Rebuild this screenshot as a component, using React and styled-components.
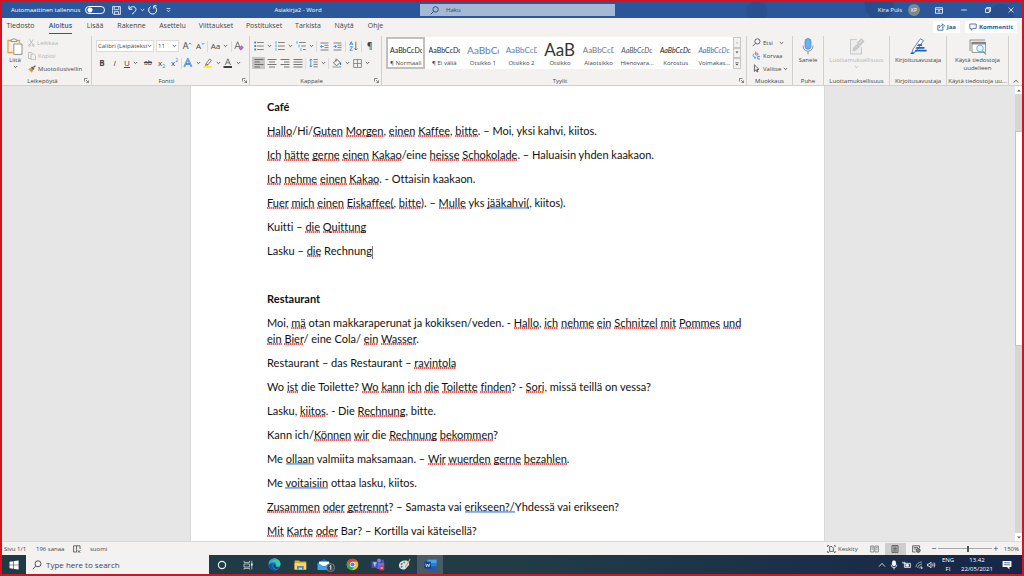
import React from "react";
import styled, { createGlobalStyle } from "styled-components";

const GlobalStyle = createGlobalStyle`
  * {
    box-sizing: border-box;
  }

  body {
    margin: 0;
    font-family: "Open Sans", "Noto Sans", sans-serif;
    font-size: 6px;
    line-height: 8px;
    color: #444;
  }

  button, input, select {
    font: inherit;
    color: inherit;
    margin: 0;
    padding: 0;
    border: 0;
    background: transparent;
    outline: none;
  }

  button {
    cursor: pointer;
  }

  p, h1, h2 {
    margin: 0;
  }
`;

const tabs = [
  ["Tiedosto", 27],
  ["Aloitus", 23],
  ["Lisää", 16],
  ["Rakenne", 27],
  ["Asettelu", 25],
  ["Viittaukset", 32],
  ["Postitukset", 34],
  ["Tarkista", 24],
  ["Näytä", 18],
  ["Ohje", 15],
];

const styleCells = [
  { name: "¶ Normaali", sample: "AaBbCcDc", color: "#222", active: true },
  { name: "¶ Ei väliä", sample: "AaBbCcDc", color: "#222" },
  { name: "Otsikko 1", sample: "AaBbCc", color: "#5b7db8", size: 10 },
  { name: "Otsikko 2", sample: "AaBbCcD", color: "#5b7db8", size: 8 },
  { name: "Otsikko", sample: "AaB", color: "#333", size: 17 },
  { name: "Alaotsikko", sample: "AaBbCcD", color: "#777", size: 8 },
  { name: "Hienovara...", sample: "AaBbCcDc", color: "#555", italic: true },
  { name: "Korostus", sample: "AaBbCcDc", color: "#222", italic: true },
  { name: "Voimakas...", sample: "AaBbCcDc", color: "#4472c4", italic: true },
];

// _word_ is a spelling mark, ~word~ is a grammar mark
const cafe = [
  "_Hallo_/Hi/_Guten_ _Morgen_, _einen_ _Kaffee_, _bitte_. – Moi, yksi kahvi, kiitos.",
  "_Ich_ _hätte_ _gerne_ _einen_ _Kakao_/eine _heisse_ _Schokolade_. – Haluaisin yhden kaakaon.",
  "_Ich_ _nehme_ _einen_ _Kakao_. - Ottaisin kaakaon.",
  "_Fuer_ _mich_ _einen_ _Eiskaffee_~(~, _bitte_). – _Mulle_ yks ~jääkahvi(~, kiitos).",
  "Kuitti – _die_ _Quittung_",
];

const restaurant = [
  "Moi, _mä_ otan makkaraperunat ja kokiksen/veden. - _Hallo_, _ich_ _nehme_ _ein_ _Schnitzel_ _mit_ _Pommes_ _und_ _ein_ _Bier_/ eine Cola/ _ein_ _Wasser_.",
  "Restaurant – das Restaurant – _ravintola_",
  "Wo _ist_ die Toilette? _Wo_ _kann_ _ich_ _die_ _Toilette_ _finden_? - _Sori_, missä teillä on vessa?",
  "Lasku, _kiitos_. - Die _Rechnung_, bitte.",
  "Kann ich/_Können_ _wir_ die _Rechnung_ _bekommen_?",
  "Me ~ollaan~ valmiita maksamaan. – _Wir_ _wuerden_ _gerne_ _bezahlen_.",
  "Me ~voitaisiin~ ottaa lasku, kiitos.",
  "_Zusammen_ _oder_ _getrennt_? – Samasta vai ~erikseen?/~Yhdessä vai erikseen?",
  "_Mit_ _Karte_ _oder_ Bar? – Kortilla vai käteisellä?",
];

function Marked({ text }) {
  return text.split(/(_[^_]+_|~[^~]+~)/).map((part, i) => {
    if (part[0] === "_") return <Spelling key={i}>{part.slice(1, -1)}</Spelling>;
    if (part[0] === "~") return <Grammar key={i}>{part.slice(1, -1)}</Grammar>;
    return part;
  });
}

function Icon({ w, h, children, ...rest }) {
  return (
    <IconStyled
      width={w}
      height={h}
      viewBox={`0 0 ${w} ${h}`}
      fill="none"
      stroke="currentColor"
      strokeWidth="0.8"
      aria-hidden="true"
      {...rest}
    >
      {children}
    </IconStyled>
  );
}

function Chevron() {
  return (
    <Icon w={5} h={4}>
      <path d="M0.8 1 L2.5 2.7 L4.2 1" />
    </Icon>
  );
}

function Lines({ align = "left" }) {
  const short = { left: [0.5, 6], center: [2, 8], right: [4, 9.5], justify: [0.5, 9.5] }[align];
  return (
    <Icon w={10} h={10} stroke="#555">
      <path
        d={`M0.5 1.5H9.5 M${short[0]} 4H${short[1]} M0.5 6.5H9.5 M${short[0]} 9H${short[1]}`}
      />
    </Icon>
  );
}

function ListIcon({ kind }) {
  const x = kind === "multi" ? [0, 2, 4] : [0, 0, 0];
  return (
    <Icon w={10} h={10} stroke="#666">
      {[1.5, 5, 8.5].map((y, i) => (
        <g key={y}>
          {kind === "bullet" ? (
            <rect x="0.3" y={y - 1} width="1.8" height="2" fill="#2b8cd8" stroke="none" />
          ) : (
            <path d={`M${x[i] + 1} ${y - 1.3}V${y + 1.3}`} stroke="#2b9bd8" />
          )}
          <path d={`M${x[i] + 3} ${y}H9.8`} />
        </g>
      ))}
    </Icon>
  );
}

function IndentIcon({ out }) {
  return (
    <Icon w={9} h={9} stroke="#666">
      <path d="M0.5 1H8.5 M4.5 3.3H8.5 M4.5 5.6H8.5 M0.5 8H8.5" />
      <path
        d={out ? "M3.6 4.5H0.6 M1.9 3.1L0.6 4.5L1.9 5.9" : "M0.4 4.5H3.4 M2.1 3.1L3.4 4.5L2.1 5.9"}
        stroke="#2b7cd3"
      />
    </Icon>
  );
}

function SizeMark({ down }) {
  return (
    <MarkIcon w={4} h={8} stroke="#2b7cd3">
      <path d={down ? "M0.6 1L2 2.4L3.4 1" : "M0.6 2.4L2 1L3.4 2.4"} />
    </MarkIcon>
  );
}

function Launcher() {
  return (
    <LauncherButton aria-label="Lisäasetukset">
      <Icon w={5} h={5} strokeWidth="0.6">
        <path d="M0.5 3.5V0.5H3.5 M2 2L4.5 4.5 M4.5 2.4V4.5H2.4" />
      </Icon>
    </LauncherButton>
  );
}

function TitleBar() {
  return (
    <TitleBarStyled>
      <QuickAccess>
        <label htmlFor="autosave">Automaattinen tallennus</label>
        <Toggle id="autosave" type="checkbox" />
        <Tool $w={22} aria-label="Tallenna">
          <Icon w={9} h={9}>
            <path d="M0.6 0.6H8.4V8.4H1.8L0.6 7.2Z M2.2 0.6V3.6H6.8V0.6 M2.4 8.4V5.6H6.6V8.4" />
          </Icon>
        </Tool>
        <Tool $w={18} aria-label="Kumoa">
          <Icon w={9} h={10} strokeWidth="1">
            <path d="M1 0.8V4.2H4.4 M1.2 4C2.8 1.4 6.2 0.8 7.6 3C8.8 5.2 6.8 7 4 9.2" />
          </Icon>
          <Chevron />
        </Tool>
        <Tool $w={15} aria-label="Toista">
          <Icon w={9} h={10} strokeWidth="1">
            <path d="M2.6 1.6A4 4 0 1 0 6.6 1.6 M8.6 0.8H5.8V3.6" />
          </Icon>
        </Tool>
        <Tool $w={16} aria-label="Mukauta">
          <Icon w={5} h={5}>
            <path d="M0.6 0.6H4.4 M1 2.2L2.5 3.8L4 2.2" />
          </Icon>
        </Tool>
      </QuickAccess>
      <FileName>Asiakirja2 - Word</FileName>
      <SearchBox htmlFor="search">
        <Icon w={9} h={9} stroke="#23447b" strokeWidth="0.9">
          <circle cx="5.6" cy="3.4" r="2.7" />
          <path d="M3.7 5.4L0.7 8.4" />
        </Icon>
        <input id="search" placeholder="Haku" />
      </SearchBox>
      <WindowTools>
        <span>Kira Puls</span>
        <Avatar>KP</Avatar>
        <Tool $w={25} aria-label="Valintanauha">
          <Icon w={8} h={7}>
            <path d="M0.5 0.7H7.5V6.3H0.5Z M0.5 2.3H7.5 M4 5.6V3.4 M3 4.3L4 3.3L5 4.3" />
          </Icon>
        </Tool>
        <Tool $w={25} aria-label="Pienennä">
          <Icon w={6} h={6}>
            <path d="M0.2 3H5.8" />
          </Icon>
        </Tool>
        <Tool $w={24} aria-label="Palauta">
          <Icon w={6} h={6}>
            <path d="M0.5 1.7H4.3V5.5H0.5Z M1.7 1.7V0.5H5.5V4.3H4.3" />
          </Icon>
        </Tool>
        <Tool $w={22} aria-label="Sulje">
          <Icon w={6} h={6}>
            <path d="M0.5 0.5L5.5 5.5 M5.5 0.5L0.5 5.5" />
          </Icon>
        </Tool>
      </WindowTools>
    </TitleBarStyled>
  );
}

function Clipboard() {
  return (
    <Group>
      <GroupBody>
        <BigTool $w={26}>
          <Icon w={16} h={17}>
            <path d="M5 2.5H1V14.5H6" stroke="#e8a33d" strokeWidth="1.3" />
            <path d="M10 2.5H12.5V5" stroke="#e8a33d" strokeWidth="1.3" />
            <path d="M4 3.5V1.8H5.4C5.6 0.4 8.2 0.4 8.4 1.8H9.8V3.5Z" fill="#fff" stroke="#777" />
            <path d="M6.8 6H15V16.4H6.8Z" fill="#fff" stroke="#777" />
          </Icon>
          <span>Liitä</span>
          <Chevron />
        </BigTool>
        <Stack>
          <TextTool disabled>
            <Icon w={7} h={8}>
              <path d="M1.4 0.4L5 5.6 M5.4 0.4L1.8 5.6" />
              <circle cx="1.5" cy="6.4" r="0.9" />
              <circle cx="5.3" cy="6.4" r="0.9" />
            </Icon>
            Leikkaa
          </TextTool>
          <TextTool disabled>
            <Icon w={8} h={8}>
              <path d="M3 6.5H0.5V0.5H3.2L4.4 1.7 M3 2H5.8L7.5 3.7V7.6H3Z" />
            </Icon>
            Kopioi
          </TextTool>
          <TextTool>
            <Icon w={8} h={8} stroke="none">
              <path d="M0.3 4.2L3.2 2.6L5.4 5L3.8 7.8Z" fill="#e8923a" />
              <path d="M3 2.6L4.2 1.6L6.4 3.8L5.4 5Z" fill="#555" />
              <path d="M5 2L7 0.2L7.8 1L6 3Z" fill="#555" />
            </Icon>
            Muotoilusivellin
          </TextTool>
        </Stack>
      </GroupBody>
      <GroupLabel $corner>Leikepöytä</GroupLabel>
      <Launcher />
    </Group>
  );
}

function FontGroup() {
  return (
    <Group>
      <Rows>
        <ToolRow>
          <SelectBox $w={58}>
            <select aria-label="Fontti">
              <option>Calibri (Leipätekst</option>
            </select>
            <Chevron />
          </SelectBox>
          <SelectBox $w={23}>
            <select aria-label="Fonttikoko">
              <option>11</option>
            </select>
            <Chevron />
          </SelectBox>
          <Tool $w={13} $size={9}>
            A<SizeMark />
          </Tool>
          <Tool $w={13} $size={8}>
            A<SizeMark down />
          </Tool>
          <Divider />
          <Tool $w={23} $size={8}>
            Aa
            <Chevron />
          </Tool>
          <Divider />
          <Tool $w={14} aria-label="Poista muotoilu">
            <Icon w={10} h={10}>
              <path d="M0.8 8L3.6 0.8L6.4 8 M1.8 5.6H5.4" stroke="#555" />
              <path d="M5 7.4L7.4 4.6L9.4 6.4L7 9.2Z" fill="#b86cc8" stroke="#9a4fb0" strokeWidth="0.5" />
            </Icon>
          </Tool>
        </ToolRow>
        <ToolRow>
          <Tool $w={12} $size={8}><b>B</b></Tool>
          <Tool $w={13} $size={8}><i>I</i></Tool>
          <Tool $w={20} $size={8}>
            <u>U</u>
            <Chevron />
          </Tool>
          <Tool $w={14} $size={7}><s>ab</s></Tool>
          <Tool $w={13} $size={8}>x<Mark>2</Mark></Tool>
          <Tool $w={13} $size={8}>x<Mark $up>2</Mark></Tool>
          <Divider />
          <Tool $w={20} aria-label="Tekstitehosteet">
            <Icon w={10} h={10}>
              <path d="M1.2 8.8L4.9 1L8.6 8.8 M2.6 6H7.2" stroke="#2b7cd3" strokeWidth="1.7" />
              <path d="M1.2 8.8L4.9 1L8.6 8.8" stroke="#fff" strokeWidth="0.4" />
            </Icon>
            <Chevron />
          </Tool>
          <Tool $w={20} aria-label="Korostusväri">
            <Icon w={10} h={10}>
              <path d="M3 5.8L6.6 1L8.4 2.2L5 6.8Z M3 5.8L2.4 7.4L5 6.8" stroke="#666" />
              <path d="M0.5 9H9" stroke="#ffee00" strokeWidth="1.6" />
            </Icon>
            <Chevron />
          </Tool>
          <Tool $w={20} aria-label="Fontin väri">
            <Icon w={10} h={10}>
              <path d="M2.2 7L4.9 0.8L7.6 7 M3.2 4.8H6.6" stroke="#555" />
              <path d="M0.5 9H9" stroke="#111" strokeWidth="1.6" />
            </Icon>
            <Chevron />
          </Tool>
        </ToolRow>
      </Rows>
      <GroupLabel $corner>Fontti</GroupLabel>
      <Launcher />
    </Group>
  );
}

function ParagraphGroup() {
  return (
    <Group>
      <Rows>
        <ToolRow $tight>
          <Tool $w={21} aria-label="Luettelomerkit"><ListIcon kind="bullet" /><Chevron /></Tool>
          <Tool $w={21} aria-label="Numerointi"><ListIcon kind="number" /><Chevron /></Tool>
          <Tool $w={21} aria-label="Monitasoinen"><ListIcon kind="multi" /><Chevron /></Tool>
          <Divider $gap />
          <Tool $w={13} aria-label="Pienennä sisennystä"><IndentIcon out /></Tool>
          <Tool $w={13} aria-label="Suurenna sisennystä"><IndentIcon /></Tool>
          <Divider $gap />
          <Tool $w={13} aria-label="Lajittele">
            <Icon w={9} h={10}>
              <path d="M0.6 4.2L2.2 0.6L3.8 4.2 M1.2 3H3.2 M0.9 5.8H3.6L0.9 9.2H3.7" stroke="#2b7cd3" />
              <path d="M6.8 0.6V9 M5.2 7.4L6.8 9L8.4 7.4" stroke="#555" />
            </Icon>
          </Tool>
          <Divider $gap />
          <Tool $w={13} $size={8}><b>¶</b></Tool>
        </ToolRow>
        <ToolRow $tight>
          <Tool $w={13} $pressed aria-label="Tasaa vasemmalle"><Lines /></Tool>
          <Tool $w={13} aria-label="Keskitä"><Lines align="center" /></Tool>
          <Tool $w={13} aria-label="Tasaa oikealle"><Lines align="right" /></Tool>
          <Tool $w={13} aria-label="Tasaa molemmat"><Lines align="justify" /></Tool>
          <Divider $gap />
          <Tool $w={20} aria-label="Riviväli">
            <Icon w={9} h={10} stroke="#666">
              <path d="M4.5 1.5H8.8 M4.5 4H8.8 M4.5 6.4H8.8 M4.5 8.8H8.8" />
              <path d="M1.8 1V9 M0.4 2.4L1.8 1L3.2 2.4 M0.4 7.6L1.8 9L3.2 7.6" stroke="#2b7cd3" />
            </Icon>
            <Chevron />
          </Tool>
          <Divider $gap />
          <Tool $w={21} aria-label="Varjostus">
            <Icon w={10} h={10}>
              <path d="M1.4 5L5 1.4L8.2 4.6L4.6 7.6Z M4 0.6V3.6" stroke="#555" />
              <path d="M8.6 4.6V7" stroke="#2b7cd3" strokeWidth="1.2" />
              <path d="M0.8 8.4H9V9.6H0.8Z" fill="#fff" stroke="#888" strokeWidth="0.5" />
            </Icon>
            <Chevron />
          </Tool>
          <Tool $w={21} aria-label="Reunaviivat">
            <Icon w={9} h={9} stroke="#777">
              <path d="M0.6 0.6H8.4V8.4H0.6Z M4.5 0.6V8.4 M0.6 4.5H8.4" />
            </Icon>
            <Chevron />
          </Tool>
        </ToolRow>
      </Rows>
      <GroupLabel $corner>Kappale</GroupLabel>
      <Launcher />
    </Group>
  );
}

function StylesGroup() {
  return (
    <Group>
      <Gallery>
        {styleCells.map((cell) => (
          <StyleCell key={cell.name} $active={cell.active}>
            <Sample $color={cell.color} $size={cell.size} $italic={cell.italic}>
              {cell.sample}
            </Sample>
            <span>{cell.name}</span>
          </StyleCell>
        ))}
        <GalleryScroll>
          <button aria-label="Ylös">
            <Icon w={4} h={3} stroke="none">
              <path d="M0.5 2.4L2 0.8L3.5 2.4Z" fill="#bbb" />
            </Icon>
          </button>
          <button aria-label="Alas">
            <Icon w={4} h={3} stroke="none">
              <path d="M0.5 0.6L2 2.2L3.5 0.6Z" fill="#444" />
            </Icon>
          </button>
          <button aria-label="Lisää tyylejä">
            <Icon w={4} h={4} stroke="none">
              <path d="M0.4 0.2H3.6V0.8H0.4Z M0.4 1.8L2 3.6L3.6 1.8Z" fill="#444" />
            </Icon>
          </button>
        </GalleryScroll>
      </Gallery>
      <GroupLabel $corner>Tyylit</GroupLabel>
      <Launcher />
    </Group>
  );
}

function RibbonEnd() {
  return (
    <>
      <Group>
        <Stack $indent>
          <TextTool>
            <Icon w={9} h={9}>
              <circle cx="5.4" cy="3.4" r="2.6" />
              <path d="M3.6 5.2L0.8 8.2" />
            </Icon>
            Etsi
            <Gap />
            <Chevron />
          </TextTool>
          <TextTool>
            <Icon w={9} h={9}>
              <path d="M3.6 0.6V4H5.8V2.2H3.6" stroke="#b05cc0" />
              <path d="M8 5.4H5.8V8H8" stroke="#2b7cd3" />
              <path d="M2.4 2.6C0.4 3 0.4 6.6 3.6 6.6 M2.4 5.2L3.8 6.6L2.4 8" stroke="#2b9bd8" />
            </Icon>
            Korvaa
          </TextTool>
          <TextTool>
            <Icon w={9} h={9}>
              <path d="M2.4 0.8V7.4L4 5.8L5 8L6 7.5L5 5.4H7Z" />
            </Icon>
            Valitse
            <Chevron />
          </TextTool>
        </Stack>
        <GroupLabel>Muokkaus</GroupLabel>
      </Group>
      <Group>
        <BigTool>
          <Icon w={12} h={17}>
            <rect x="3" y="0.6" width="6" height="10.6" rx="3" fill="#6bb2ea" stroke="#3f8fd0" />
            <path d="M1 7.6C1 15 11 15 11 7.6 M6 13.4V16.4" stroke="#777" />
          </Icon>
          <span>Sanele</span>
        </BigTool>
        <GroupLabel>Puhe</GroupLabel>
      </Group>
      <Group>
        <BigTool disabled>
          <Icon w={16} h={17} stroke="#bbb">
            <path d="M8 1.6H1.5V16H12.5V9.4" fill="#eee" />
            <path d="M4 12.8L4.6 9.8L8.6 6L10.8 8.2L6.8 12Z M8.4 4.6L12.4 0.8L15 3.4L11.2 7.4Z" fill="#ccc" />
            <path d="M10.2 5.2L13.2 2.4" stroke="#eee" />
          </Icon>
          <span>Luottamuksellisuus</span>
          <Chevron />
        </BigTool>
        <GroupLabel>Luottamuksellisuus</GroupLabel>
      </Group>
      <Group>
        <BigTool>
          <Icon w={17} h={17} stroke="none">
            <path d="M2.6 11.8L10.4 0.8L13.4 2.6L6 13.4L2 15.6Z" fill="#fff" stroke="#2b62c4" />
            <path d="M8.2 6.2H12V8H7Z M6.6 9H14.4V10.8H5.6Z M5.4 11.8H16.6V13.6H4.4Z M1 14.4L5 14.4L3.4 16H0.4Z" fill="#1f5fc0" />
          </Icon>
          <span>Kirjoitusavustaja</span>
        </BigTool>
        <GroupLabel>Kirjoitusavustaja</GroupLabel>
      </Group>
      <Group>
        <BigTool>
          <Icon w={18} h={17} stroke="#777">
            <path d="M1 13V2H16" />
            <path d="M3 4.4H16.4V14.4H3Z" fill="#fff" />
            <path d="M3 4.4H16.4V6H3Z" fill="#999" />
            <circle cx="11" cy="10.4" r="3.3" fill="#e6f4fd" stroke="#3aa0dc" />
            <path d="M13.4 12.8L17 16.4" stroke="#3aa0dc" strokeWidth="1.1" />
          </Icon>
          <span>Käytä tiedostoja<br />uudelleen</span>
        </BigTool>
        <GroupLabel>Käytä tiedostoja uu...</GroupLabel>
      </Group>
      <Collapse aria-label="Kutista valintanauha">
        <Icon w={6} h={5}>
          <path d="M0.8 3.6L3 1.2L5.2 3.6" />
        </Icon>
      </Collapse>
    </>
  );
}

function StatusBar() {
  return (
    <StatusStyled>
      <StatusText $w={32}>Sivu 1/1</StatusText>
      <StatusText $w={37}>196 sanaa</StatusText>
      <StatusText $w={17}>
        <Icon w={8} h={8}>
          <path d="M0.6 0.8H3.6V7H0.6Z M3.6 0.8H7V4 M4.6 5.6L7.4 7.6 M7.4 5.2L5 7.6" />
        </Icon>
      </StatusText>
      <span>suomi</span>
      <Spacer />
      <TextTool>
        <Icon w={9} h={8}>
          <path d="M0.6 2V0.6H2 M7 0.6H8.2V2 M0.6 6V7.4H2 M7 7.4H8.2V6 M2.6 1.6H5L6.4 3V6.4H2.6Z" />
        </Icon>
        Keskity
      </TextTool>
      <ViewButtons>
        <ViewButton aria-label="Lukutila">
          <Icon w={9} h={8} stroke="#777">
            <path d="M0.6 1H4V7H0.6Z M5 1H8.4V7H5Z M1.4 2.6H3.2 M1.4 4.2H3.2 M5.8 2.6H7.6 M5.8 4.2H7.6" />
          </Icon>
        </ViewButton>
        <ViewButton $active aria-label="Tulostusasettelu">
          <Icon w={8} h={8}>
            <path d="M1 0.6H7V7.4H1Z M2.2 2H5.8 M2.2 3.4H5.8 M2.2 4.8H5.8 M2.2 6H5.8" />
          </Icon>
        </ViewButton>
        <ViewButton aria-label="Verkkoasettelu">
          <Icon w={9} h={8}>
            <path d="M0.6 0.8H7.6V3 M0.6 0.8V7H3.6 M1.8 2.4H6 M1.8 4H4" />
            <circle cx="6.2" cy="5.4" r="2" fill="#888" />
          </Icon>
        </ViewButton>
      </ViewButtons>
      <ZoomButton aria-label="Loitonna">−</ZoomButton>
      <ZoomRange type="range" aria-label="Zoomaus" min="0" max="100" defaultValue="56" />
      <ZoomButton aria-label="Lähennä">+</ZoomButton>
      <ZoomLevel>150%</ZoomLevel>
    </StatusStyled>
  );
}

function Taskbar() {
  return (
    <TaskbarStyled>
      <StartButton aria-label="Start">
        <Icon w={10} h={10} stroke="none">
          <path d="M0.5 1.7L4.4 1.2V4.7H0.5Z M5 1.1L9.6 0.5V4.7H5Z M0.5 5.3H4.4V8.8L0.5 8.3Z M5 5.3H9.6V9.5L5 8.9Z" fill="#fff" />
        </Icon>
      </StartButton>
      <TaskSearch htmlFor="task-search">
        <Icon w={10} h={10} strokeWidth="0.9">
          <circle cx="6" cy="3.8" r="3" />
          <path d="M3.8 6L0.8 9.2" />
        </Icon>
        <input id="task-search" placeholder="Type here to search" />
      </TaskSearch>
      <TaskApps>
        <TaskApp aria-label="Cortana">
          <Icon w={12} h={12}>
            <circle cx="6" cy="6" r="3.6" stroke="#e8eef0" strokeWidth="1.2" />
          </Icon>
        </TaskApp>
        <TaskApp aria-label="Task View">
          <Icon w={12} h={12} stroke="#d0d8da">
            <path d="M2 1.8V3.4H7.6V1.8 M2 5H7.6V8H2Z M2 10.6V9.4H7.6V10.6 M9.8 1.8V10.4" />
            <path d="M9.2 4.4H10.6V6.4H9.2Z" fill="#fff" stroke="none" />
          </Icon>
        </TaskApp>
        <TaskApp aria-label="Edge">
          <Icon w={13} h={13} stroke="none">
            <circle cx="6.5" cy="6.5" r="6" fill="#1b7fd0" />
            <path d="M0.6 6C1 2.6 3.6 0.5 6.5 0.5C10 0.5 12.5 3 12.5 6C12.5 8.4 9.6 9.2 8 8.2C9 6.6 7.8 4.2 5.4 4C3.4 3.8 1.4 4.6 0.6 6Z" fill="#42c7a0" />
            <path d="M0.6 6C1 2.6 3.6 0.5 6.5 0.5C7.6 0.5 8.6 0.8 9.4 1.2C6 1.6 3 3 0.6 6Z" fill="#2ba4dc" />
            <path d="M5.2 5.6C3.4 6.8 4 11 8.6 12.1C5 13 1.4 11 0.9 7.6C1.8 5.6 3.8 5 5.2 5.6Z" fill="#1253a0" />
            <path d="M5.6 6C6.6 5.6 7.8 6.4 7.4 7.6C7.4 9.4 10 10 11.8 9.2C10.6 11 8.8 11 7.4 10.4C5.4 9.4 4.8 7.4 5.6 6Z" fill="#203f50" />
          </Icon>
        </TaskApp>
        <TaskApp aria-label="File Explorer">
          <Icon w={13} h={12} stroke="none">
            <path d="M0.6 1.4H5L6 2.6H12.2V10.6H0.6Z" fill="#e8a928" />
            <path d="M0.6 4H12.2V10.6H0.6Z" fill="#fbd668" />
            <path d="M3 7H9.8V10.6H8V8.8H4.8V10.6H3Z" fill="#3a8fd6" />
          </Icon>
        </TaskApp>
        <TaskApp aria-label="Mail">
          <Icon w={18} h={14} stroke="none">
            <path d="M0.6 5L7 0.8L13.4 5V12H0.6Z" fill="#0f6cbd" />
            <path d="M2 3.6H12V8H2Z" fill="#fff" />
            <path d="M0.6 5L7 8.6L13.4 5V12H0.6Z" fill="#35a8ec" />
            <circle cx="13.6" cy="9.6" r="4" fill="#3a4448" stroke="#8d989c" strokeWidth="0.7" />
            <path d="M12.6 8.4L13.8 7.6V11.8" stroke="#fff" strokeWidth="0.9" />
          </Icon>
        </TaskApp>
        <TaskApp aria-label="Chrome">
          <Icon w={13} h={13} stroke="none">
            <circle cx="6.5" cy="6.5" r="5.8" fill="#fbc116" />
            <path d="M1.5 3.6A5.8 5.8 0 0 1 11.5 3.6L6.5 3.8L4.2 7.8Z" fill="#e33b2e" />
            <path d="M1.5 3.6A5.8 5.8 0 0 0 6 12.3L8.8 7.8L4.2 7.8Z" fill="#2da94f" />
            <circle cx="6.5" cy="6.5" r="2.7" fill="#fff" />
            <circle cx="6.5" cy="6.5" r="2.1" fill="#4285f4" />
          </Icon>
        </TaskApp>
        <TaskApp aria-label="Teams">
          <Icon w={14} h={13} stroke="none">
            <circle cx="8" cy="2.4" r="2" fill="#7b83eb" />
            <circle cx="11.6" cy="3" r="1.4" fill="#5059c9" />
            <path d="M5 4.6H13.2V8.6C12.6 11.4 6 12.4 5 9Z" fill="#6a72d8" />
            <rect x="0.6" y="3.2" width="6.6" height="6.6" rx="0.6" fill="#4b53bc" />
            <path d="M2.2 5H5.6 M3.9 5V8.4" stroke="#fff" strokeWidth="0.9" />
            <circle cx="10.8" cy="10" r="2.6" fill="#d5304f" />
            <path d="M9.4 10H12.2" stroke="#fff" strokeWidth="0.8" />
          </Icon>
        </TaskApp>
        <TaskApp aria-label="Paint">
          <Icon w={13} h={13} stroke="none">
            <path d="M1 8C0.6 4.6 4 2 8 2.6C11.4 3.2 12.2 6.6 10 8.2C8.6 9 8.8 10.6 6.4 11.4C3.8 12 1.2 10.6 1 8Z" fill="#d8e4ea" />
            <circle cx="3.6" cy="6" r="1" fill="#d8453a" />
            <circle cx="6.2" cy="4.6" r="1" fill="#3fa34d" />
            <circle cx="3.6" cy="8.8" r="1" fill="#2b7cd3" />
            <path d="M11.8 0.6L12.6 1.4L7.6 9.6L6.8 9Z" fill="#e0973a" />
          </Icon>
        </TaskApp>
        <TaskApp $active aria-label="Word">
          <Icon w={13} h={12} stroke="none">
            <path d="M3.6 0.6H12.6V4H3.6Z" fill="#41a5ee" />
            <path d="M3.6 4H12.6V7.6H3.6Z" fill="#2b7cd3" />
            <path d="M3.6 7.6H12.6V11.2H3.6Z" fill="#185abd" />
            <rect x="0.4" y="2.8" width="6.6" height="6.6" rx="0.5" fill="#103f91" />
            <path d="M1.6 4.6L2.6 7.8L3.7 5L4.8 7.8L5.8 4.6" stroke="#fff" strokeWidth="0.7" />
          </Icon>
        </TaskApp>
      </TaskApps>
      <Spacer />
      <Tray>
        <Icon w={8} h={8}>
          <path d="M1 5.6L4 2.4L7 5.6" />
        </Icon>
        <Icon w={8} h={10} stroke="#fff">
          <rect x="2.4" y="0.8" width="3.2" height="5" rx="1.6" fill="#fff" />
          <path d="M1.2 4.8C1.4 8.6 6.6 8.6 6.8 4.8 M4 7.6V9.6" />
        </Icon>
        <Icon w={9} h={8}>
          <path d="M2.4 2.4H8.4V6.4H2.4Z M0.4 2H3.4 M1 0.8V2 M2.8 0.8V2" />
          <path d="M3.4 3.2H6.8V5.6H3.4Z" fill="#fff" stroke="none" />
        </Icon>
        <Icon w={8} h={8} stroke="#b8c0cc">
          <path d="M0.8 6A6.4 6.4 0 0 1 7 1 M2.4 7A5 5 0 0 1 7 3 M4.4 7.4A3 3 0 0 1 7 5.2" />
          <circle cx="6.6" cy="7" r="0.7" fill="#fff" />
        </Icon>
        <Icon w={9} h={8}>
          <path d="M0.6 3H2L4 1.2V6.8L2 5H0.6Z M5.6 2.6Q6.6 4 5.6 5.4 M7 1.6Q8.8 4 7 6.4" />
        </Icon>
        <TrayText $w={16}>ENG<br />FI</TrayText>
        <TrayText $w={34}>13.42<br />22/05/2021</TrayText>
        <Icon w={18} h={10}>
          <path d="M4.6 1H13.4V7H11.4V9.4L9 7H4.6Z" fill="#fff" stroke="none" />
          <path d="M6 2.8H12 M6 4.8H12" stroke="#22335a" strokeWidth="0.7" />
        </Icon>
      </Tray>
    </TaskbarStyled>
  );
}

function App() {
  return (
    <>
      <GlobalStyle />
      <Screen>
        <TitleBar />
        <TabBar>
          {tabs.map(([name, width]) => (
            <Tab key={name} $w={width} $active={name === "Aloitus"}>
              {name}
            </Tab>
          ))}
          <Spacer />
          <ShareTools>
            <ShareButton>
              <Icon w={8} h={8}>
                <path d="M3 2.6H0.8V7.2H6V5.4 M2.4 5C2.6 3.4 3.8 2.4 5.4 2.4V0.8L7.6 3L5.4 5V3.6" />
              </Icon>
              Jaa
            </ShareButton>
            <ShareButton>
              <Icon w={8} h={8}>
                <path d="M0.8 1H7.2V5.4H4L2.2 7.2V5.4H0.8Z" />
              </Icon>
              Kommentit
            </ShareButton>
          </ShareTools>
        </TabBar>
        <Ribbon>
          <Clipboard />
          <FontGroup />
          <ParagraphGroup />
          <StylesGroup />
          <RibbonEnd />
        </Ribbon>
        <Workspace>
          <Canvas>
            <Page>
              <h1>Café</h1>
              {cafe.map((line) => (
                <p key={line}><Marked text={line} /></p>
              ))}
              <p>
                <Marked text="Lasku – _die_ Rechnung" />
                <Caret />
              </p>
              <p>&nbsp;</p>
              <h2>Restaurant</h2>
              {restaurant.map((line) => (
                <p key={line}><Marked text={line} /></p>
              ))}
            </Page>
          </Canvas>
          <Scrollbar>
            <button aria-label="Vieritä ylös">
              <Icon w={4} h={3} stroke="none">
                <path d="M0.2 2.6L2 0.6L3.8 2.6Z" fill="#555" />
              </Icon>
            </button>
            <Track>
              <Thumb />
            </Track>
            <button aria-label="Vieritä alas">
              <Icon w={4} h={3} stroke="none">
                <path d="M0.2 0.4L2 2.4L3.8 0.4Z" fill="#555" />
              </Icon>
            </button>
          </Scrollbar>
        </Workspace>
        <StatusBar />
        <Taskbar />
      </Screen>
    </>
  );
}

const Screen = styled.div`
  display: flex;
  flex-direction: column;
  min-height: 100vh;
  border: 2px solid #d8111f;
  background: #f3f2f1;
`;

const IconStyled = styled.svg`
  display: block;
  flex: none;
`;

const MarkIcon = styled(Icon)`
  margin-left: -3px;
`;

const Spacer = styled.div`
  flex: 1;
`;

const Gap = styled.span`
  width: 2px;
`;

const Tool = styled.button`
  display: flex;
  align-items: center;
  justify-content: center;
  gap: 3px;
  flex: none;
  width: ${(p) => p.$w}px;
  height: 12px;
  font-size: ${(p) => p.$size || 6}px;
  background: ${(p) => (p.$pressed ? "#c8c6c4" : "transparent")};
`;

const Mark = styled.span`
  align-self: ${(p) => (p.$up ? "flex-start" : "flex-end")};
  margin-left: -3px;
  font-size: 5px;
  line-height: 6px;
  color: #2b7cd3;
`;

const TitleBarStyled = styled.header`
  display: grid;
  grid-template-columns: 176fr 242fr 195fr 407fr;
  align-items: center;
  height: 16px;
  color: #fff;
  background:
    radial-gradient(circle at 74% 60%, #284f8f 0 10px, transparent 11px),
    radial-gradient(circle at 86% 20%, #274d8c 0 14px, transparent 15px),
    radial-gradient(circle at 98% 90%, #274d8c 0 12px, transparent 13px),
    #2b579a;
`;

const QuickAccess = styled.div`
  display: flex;
  align-items: center;
  padding-left: 9px;

  label {
    width: 70px;
    white-space: nowrap;
  }
`;

const Toggle = styled.input`
  appearance: none;
  width: 20px;
  height: 8px;
  margin-left: 4px;
  border: 1px solid #fff;
  border-radius: 4px;
  background: radial-gradient(circle at 4px 3px, #fff 0 2px, transparent 3px);
`;

const FileName = styled.span`
  padding-right: 2px;
  text-align: center;
`;

const SearchBox = styled.label`
  display: flex;
  align-items: center;
  gap: 7px;
  height: 12px;
  padding-left: 10px;
  background: #a5b8d6;

  input {
    flex: 1;
    min-width: 0;
  }
  input::placeholder {
    color: #23447b;
    opacity: 1;
  }
`;

const WindowTools = styled.div`
  display: flex;
  align-items: center;
  justify-content: flex-end;
`;

const Avatar = styled.span`
  display: grid;
  place-items: center;
  width: 12px;
  height: 12px;
  margin: 0 6px;
  border-radius: 50%;
  font-size: 5px;
  background: #7d8a8c;
`;

const TabBar = styled.nav`
  display: flex;
  align-items: center;
  gap: 15px;
  height: 18px;
  padding: 0 5px;
`;

const Tab = styled.button`
  width: ${(p) => p.$w}px;
  height: 14px;
  display: flex;
  justify-content: center;
  white-space: nowrap;
  font-size: 7px;
  line-height: 12px;
  font-weight: ${(p) => (p.$active ? 600 : 400)};
  color: ${(p) => (p.$active ? "#2b579a" : "#444")};
  border-bottom: 1px solid ${(p) => (p.$active ? "#2b579a" : "transparent")};
`;

const ShareTools = styled.div`
  display: flex;
  gap: 5px;
`;

const ShareButton = styled.button`
  display: flex;
  align-items: center;
  gap: 2px;
  height: 12px;
  padding: 0 4px;
  font-weight: 700;
  color: #2b579a;
  background: #fff;
`;

const Ribbon = styled.div`
  display: grid;
  grid-template-columns: 90fr 158fr 132fr 365fr 46fr 31fr 66fr 57fr 62fr 13fr;
  height: 50px;
  border-bottom: 1px solid #d2d0ce;
`;

const Group = styled.section`
  position: relative;
  display: flex;
  flex-direction: column;
  justify-content: space-between;
  min-width: 0;
  border-right: 1px solid #d2d0ce;
`;

const GroupBody = styled.div`
  display: flex;
`;

const GroupLabel = styled.span`
  padding-right: ${(p) => (p.$corner ? 8 : 0)}px;
  text-align: center;
  white-space: nowrap;
`;

/* sits over the label line, in the corner of the group */
const LauncherButton = styled.button`
  position: absolute;
  right: 2px;
  bottom: 2px;
`;

const BigTool = styled.button`
  display: flex;
  flex-direction: column;
  align-items: center;
  gap: 1px;
  width: ${(p) => (p.$w ? `${p.$w}px` : "100%")};
  padding-top: 2px;
  white-space: nowrap;

  &:disabled {
    color: #b5b3b1;
  }
`;

const Stack = styled.div`
  display: flex;
  flex-direction: column;
  gap: 4px;
  padding-top: 2px;
  padding-left: ${(p) => (p.$indent ? 5 : 0)}px;
`;

const TextTool = styled.button`
  display: flex;
  align-items: center;
  gap: 2px;
  height: 9px;
  white-space: nowrap;

  &:disabled {
    color: #b5b3b1;
  }
`;

const Rows = styled.div`
  display: flex;
  flex-direction: column;
  gap: 5px;
  padding-top: 4px;
`;

const ToolRow = styled.div`
  display: flex;
  align-items: center;
  padding-left: ${(p) => (p.$tight ? 2 : 4)}px;
  height: 12px;
`;

const SelectBox = styled.span`
  display: flex;
  align-items: center;
  width: ${(p) => p.$w}px;
  height: 12px;
  margin-right: 2px;
  padding: 0 1px;
  border: 1px solid #dddbd9;
  background: #fff;

  select {
    appearance: none;
    flex: 1;
    min-width: 0;
  }
`;

const Divider = styled.span`
  flex: none;
  width: 1px;
  height: 11px;
  margin: 0 ${(p) => (p.$gap ? 1 : 0)}px;
  background: #dcdad8;
`;

const Gallery = styled.div`
  display: grid;
  grid-template-columns: repeat(9, 1fr) 8px;
  height: 32px;
  margin: 1px 5px 0 4px;
  background: #fff;
`;

const StyleCell = styled.button`
  display: flex;
  flex-direction: column;
  align-items: center;
  justify-content: flex-end;
  min-width: 0;
  overflow: hidden;
  padding: 0 3px 2px 4px;
  white-space: nowrap;
  box-shadow: ${(p) => (p.$active ? "inset 0 0 0 2px #c2c0be" : "none")};
`;

const Sample = styled.span`
  display: flex;
  align-items: center;
  width: 100%;
  height: 18px;
  overflow: hidden;
  font-family: Lato, sans-serif;
  font-size: ${(p) => p.$size || 7}px;
  font-style: ${(p) => (p.$italic ? "italic" : "normal")};
  line-height: 18px;
  color: ${(p) => p.$color};
`;

const GalleryScroll = styled.div`
  display: grid;
  grid-template-rows: repeat(3, 1fr);

  button {
    display: grid;
    place-items: center;
    border: 1px solid #c8c6c4;
    background: #f3f2f1;
  }
`;

const Collapse = styled.button`
  display: flex;
  align-items: flex-end;
  justify-content: center;
  padding-bottom: 1px;
`;

const Workspace = styled.main`
  display: flex;
  flex: 1;
`;

const Canvas = styled.div`
  display: flex;
  justify-content: center;
  flex: 1;
  padding-right: 2px;
  background: #e6e6e6;
`;

const Page = styled.article`
  width: 62.8%;
  padding: 13px 76px 0;
  font-family: Lato, "Open Sans", sans-serif;
  font-size: 11px;
  font-variant-ligatures: none;
  line-height: 16px;
  color: #111;
  background: #fff;
  border: 1px solid #d8d8d8;
  border-width: 0 1px;

  h1, h2 {
    font-size: 11px;
    font-weight: 700;
  }
  h1, h2, p {
    margin-bottom: 8px;
  }
  p:last-child {
    margin-bottom: 0;
  }
`;

const Spelling = styled.span`
  background: repeating-linear-gradient(90deg, #f25a5a 0 1px, #f9b0b0 1px 2px) 0 100% / 100% 2px no-repeat;
`;

const Grammar = styled.span`
  background: linear-gradient(#6f9af0, #a9c3f7) 0 100% / 100% 2px no-repeat;
`;

const Caret = styled.span`
  display: inline-block;
  width: 1px;
  height: 13px;
  vertical-align: middle;
  background: #777;
`;

const Scrollbar = styled.div`
  display: flex;
  flex-direction: column;
  width: 7px;
  background: #d6d6d6;

  button {
    display: grid;
    place-items: center;
    height: 8px;
    background: #fff;
  }
`;

const Track = styled.div`
  display: grid;
  grid-template-rows: 37fr 216fr 187fr;
  flex: 1;
`;

const Thumb = styled.div`
  grid-row: 2;
  background: #fff;
  border: 1px solid #c4c4c4;
  border-right: 0;
`;

const StatusStyled = styled.footer`
  display: flex;
  align-items: center;
  height: 14px;
  padding: 0 3px 0 2px;
  border-top: 1px solid #dcdad8;
  background: #f3f2f1;
`;

const StatusText = styled.span`
  width: ${(p) => p.$w}px;
`;

const ViewButtons = styled.div`
  display: flex;
  margin: 0 3px 0 6px;
`;

const ViewButton = styled.button`
  display: grid;
  place-items: center;
  width: 21px;
  height: 12px;
  background: ${(p) => (p.$active ? "#d0cecc" : "transparent")};
`;

const ZoomButton = styled.button`
  width: 8px;
  font-size: 9px;
`;

const ZoomRange = styled.input`
  appearance: none;
  width: 54px;
  height: 8px;
  background: linear-gradient(#aaa, #aaa) center / 100% 1px no-repeat;

  &::-webkit-slider-thumb {
    appearance: none;
    width: 2px;
    height: 6px;
    background: #555;
  }
`;

const ZoomLevel = styled.span`
  padding-left: 4px;
`;

const TaskbarStyled = styled.footer`
  display: flex;
  height: 19px;
  color: #fff;
  background: linear-gradient(90deg, #1f3a44 0%, #223c46 50%, #1b2f48 80%, #172648 100%);
`;

const StartButton = styled.button`
  display: grid;
  place-items: center;
  width: 24px;
`;

const TaskSearch = styled.label`
  display: flex;
  align-items: center;
  gap: 4px;
  width: 183px;
  padding-left: 6px;
  color: #444;
  background: #f2f2f2;

  input {
    flex: 1;
    min-width: 0;
    font-size: 8px;
  }
  input::placeholder {
    color: #444;
    opacity: 1;
  }
`;

const TaskApps = styled.div`
  display: flex;
`;

const TaskApp = styled.button`
  display: grid;
  place-items: center;
  width: 26px;
  background: ${(p) => (p.$active ? "#485c66" : "transparent")};
`;

const Tray = styled.div`
  display: flex;
  align-items: center;
  gap: 4px;
  padding-right: 6px;
`;

const TrayText = styled.span`
  width: ${(p) => p.$w}px;
  text-align: center;
  line-height: 9px;
`;

export default App;
